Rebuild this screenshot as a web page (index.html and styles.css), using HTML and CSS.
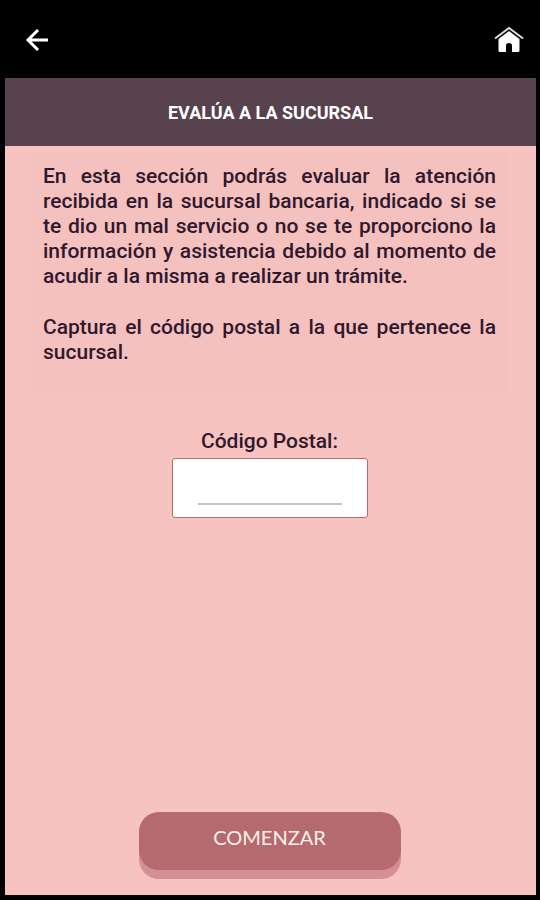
FILE: index.html
```html
<!DOCTYPE html>
<html lang="es">

<head>
    <meta charset="UTF-8">
    <meta name="viewport" content="width=device-width, initial-scale=1.0">
    <title>Evalúa a la sucursal</title>
    <link rel="stylesheet" href="styles.css">
</head>

<body>

    <header class="topbar">
        <a href="#" class="icon-link" aria-label="Regresar">
            <svg width="24" height="24" viewBox="0 0 24 24" fill="none" stroke="#fff" stroke-width="3">
                <path d="M23 12H4M13 2L3 12l10 10" />
            </svg>
        </a>
        <a href="#" class="icon-link" aria-label="Inicio">
            <svg width="30" height="28" viewBox="0 0 30 28">
                <path d="M1 12.500L15 2l14 10.500" fill="none" stroke="#ddd" stroke-width="2" />
                <path d="M15 5L4.500 13V24.500q0 1.500 1.500 1.500h6V19.500q0-2.500 3-2.500t3 2.500V26h6q1.500 0 1.500-1.500V13z" fill="#fff" />
            </svg>
        </a>
    </header>

    <main class="container">
        <h1 class="title">EVALÚA A LA SUCURSAL</h1>

        <form class="form-container">
            <div class="intro">
                <p>En esta sección podrás evaluar la atención recibida en la sucursal bancaria, indicado si se te dio un mal servicio o no se te proporciono la información y asistencia debido al momento de acudir a la misma a realizar un trámite.</p>
                <p>Captura el código postal a la que pertenece la sucursal.</p>
            </div>

            <div class="form-group">
                <label for="cp">Código Postal:</label>
                <div class="input-box">
                    <input type="text" id="cp" name="cp" inputmode="numeric" maxlength="5">
                </div>
            </div>

            <button type="button">COMENZAR</button>
        </form>
    </main>

</body>

</html>
```

FILE: styles.css
```css
* {
    box-sizing: border-box;
}

body {
    background-color: #000;
    font-family: Roboto, sans-serif;
    color: #30182d;
    margin: 0;
    padding: 0 4px 5px 5px;
    min-height: 100vh;
    display: flex;
    flex-direction: column;
}

.topbar {
    display: flex;
    justify-content: space-between;
    align-items: center;
    height: 78px;
    padding: 2px 12px 0 20px;
}

.icon-link {
    display: flex;
}

.container {
    flex: 1;
    display: flex;
    flex-direction: column;
    background-color: #f7c3c1;
}

.title {
    margin: 0;
    padding: 23px 0 21px;
    background-color: #58424e;
    color: #fff;
    font-size: 18px;
    line-height: 24px;
    font-weight: 700;
    text-align: center;
}

.form-container {
    flex: 1;
    display: flex;
    flex-direction: column;
    align-items: center;
    padding: 6px 28px 25px 26px;
}

.intro {
    width: 100%;
    padding: 12px 12px 28px;
    background-color: #f5c1bf;
    font-size: 21px;
    line-height: 25px;
    font-weight: 500;
    text-align: justify;
}

.intro p {
    margin: 0 0 26px;
}

.intro p:last-child {
    margin-bottom: 0;
}

.form-group {
    display: flex;
    flex-direction: column;
    align-items: center;
    margin-top: 36px;
}

label {
    font-size: 21px;
    line-height: 25px;
    font-weight: 500;
    margin-bottom: 4px;
}

.input-box {
    width: 196px;
    height: 60px;
    padding: 12px 25px;
    background-color: #fff;
    border: 1px solid #b56a70;
    border-radius: 3px;
}

.input-box input {
    display: block;
    width: 100%;
    height: 100%;
    padding: 0;
    border: none;
    border-bottom: 2px solid #c4c4c4;
    background: none;
    font: inherit;
    font-size: 20px;
    text-align: center;
    outline: none;
}

button {
    width: 262px;
    height: 58px;
    margin-top: auto;
    padding: 0 0 8px;
    background-color: #b56a70;
    color: #fff0e6;
    border: none;
    border-radius: 20px;
    box-shadow: 0 9px 0 #d58e93;
    font-family: Lato, sans-serif;
    font-size: 20px;
    font-weight: 400;
    cursor: pointer;
}
```
